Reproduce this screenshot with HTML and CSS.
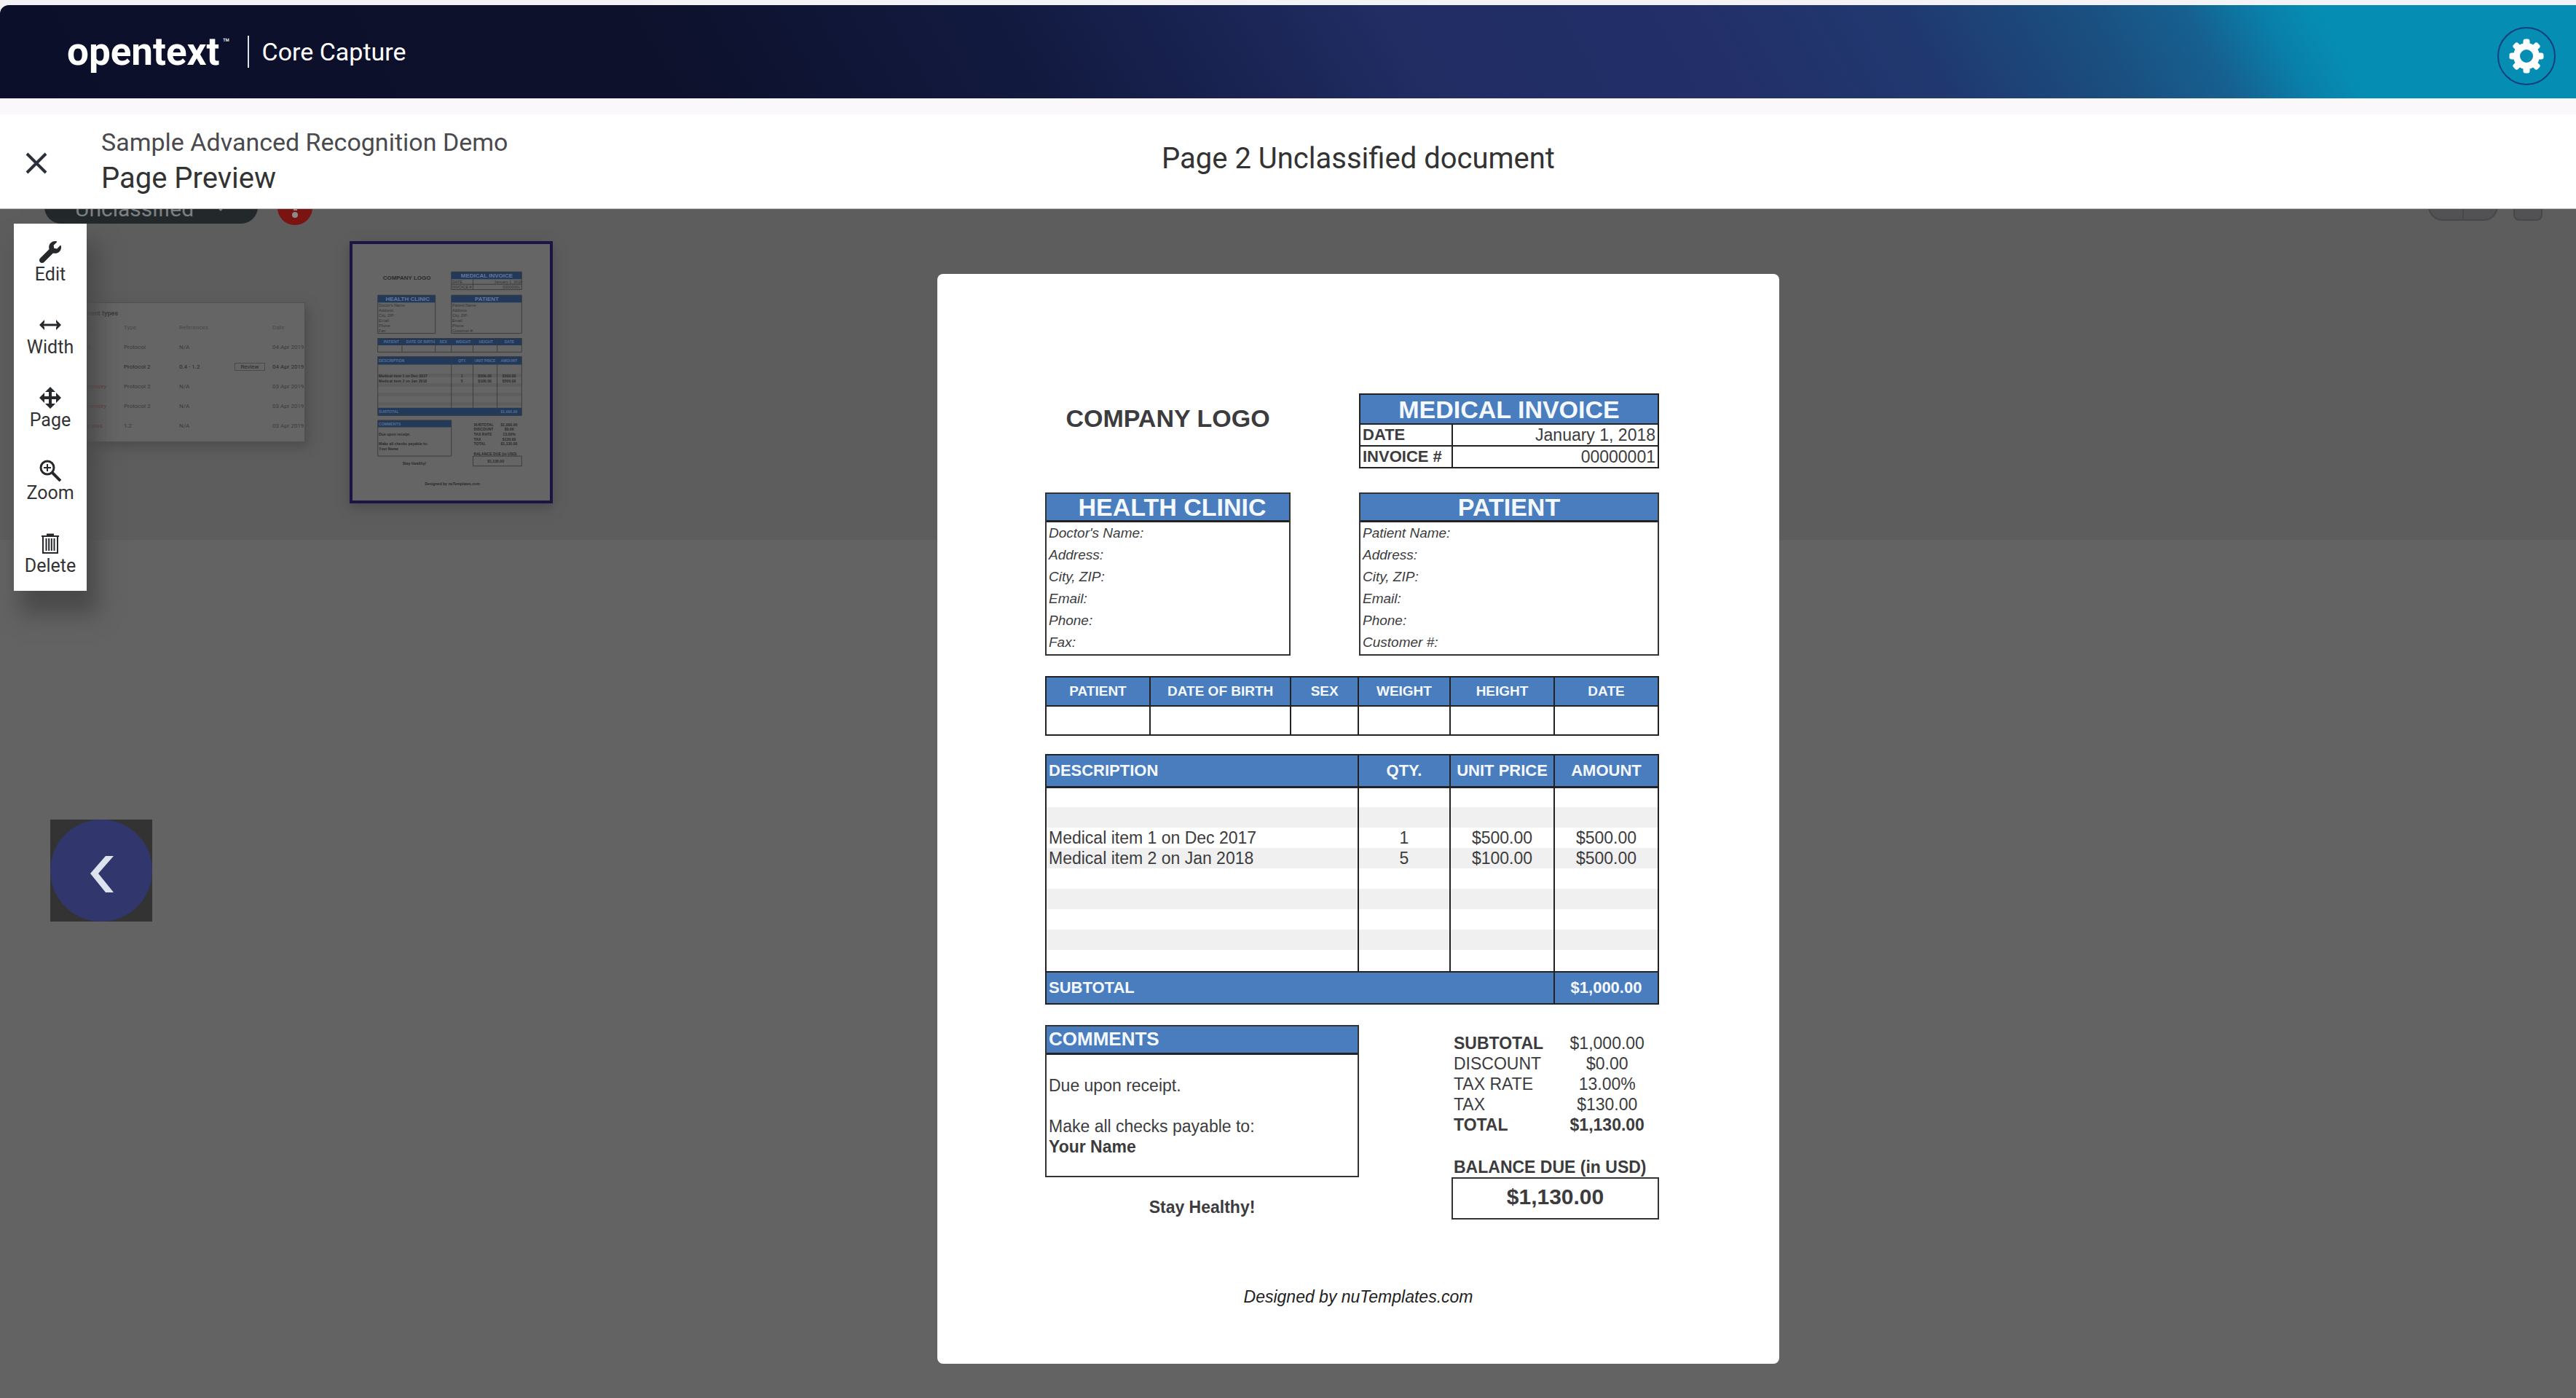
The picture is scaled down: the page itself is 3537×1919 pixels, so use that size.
FILE: index.html
```html
<!DOCTYPE html>
<html lang="en">
<head>
<meta charset="utf-8">
<title>Core Capture - Page Preview</title>
<link rel="stylesheet" href="styles.css">
</head>
<body>
<header class="masthead">
  <div class="brand">opentext<span class="tm">™</span></div>
  <div class="product">Core Capture</div>
  <button class="settings" aria-label="Settings">
    <svg viewBox="0 0 48 48" width="48" height="48">
      <g fill="#fff">
        <path fill-rule="evenodd" d="M24 6a18 18 0 1 0 0 36a18 18 0 0 0 0-36zM24 15a9 9 0 1 1 0 18a9 9 0 0 1 0-18z"/>
        <g id="teeth">
          <rect x="19.500" y="0.500" width="9" height="9" rx="3"/>
          <rect x="19.500" y="38.500" width="9" height="9" rx="3"/>
          <rect x="0.500" y="19.500" width="9" height="9" rx="3"/>
          <rect x="38.500" y="19.500" width="9" height="9" rx="3"/>
        </g>
        <use href="#teeth" transform="rotate(45 24 24)"/>
      </g>
    </svg>
  </button>
</header>

<div class="titlebar">
  <div class="crumbs">
    <button class="close" aria-label="Close">
      <svg viewBox="0 0 30 30" width="30" height="30"><path d="M2 2L28 28M28 2L2 28" stroke="#2b2f38" stroke-width="4" fill="none"/></svg>
    </button>
    <div>
      <div class="job">Sample Advanced Recognition Demo</div>
      <h1 class="view">Page Preview</h1>
    </div>
  </div>
  <h2 class="doc-title">Page 2 Unclassified document</h2>
</div>

<main class="stage">
  <div class="backdrop" aria-hidden="true">
    <div class="band">
      <div class="class-row">
        <div class="pill">Unclassified
          <svg viewBox="0 0 14 8" width="14" height="8"><path d="M0 0h14L7 8z" fill="#7c8082"/></svg>
        </div>
        <svg class="alert" viewBox="0 0 48 48" width="48" height="48"><circle cx="24" cy="24" r="24" fill="#7a1410"/><path d="M21 8h7l-1 20h-5z" fill="#8b8b8b"/><circle cx="24" cy="34" r="4" fill="#8b8b8b"/></svg>
        <div class="switch"><span></span><span></span></div>
        <div class="more"></div>
      </div>
      <div class="thumbs">
        <div class="thumb-list">
          <div class="list-title">Document types</div>
          <table>
            <tr><th>Name</th><th>Type</th><th>References</th><th></th><th>Date</th></tr>
            <tr><td>Invoice</td><td>Protocol</td><td>N/A</td><td></td><td>04 Apr 2019</td></tr>
            <tr class="strong"><td>Claim</td><td>Protocol 2</td><td>0.4 - 1.2</td><td><span class="tag">Review</span></td><td>04 Apr 2019</td></tr>
            <tr><td class="bad">Low memory</td><td>Protocol 2</td><td>N/A</td><td></td><td>03 Apr 2019</td></tr>
            <tr><td class="bad">Low memory</td><td>Protocol 2</td><td>N/A</td><td></td><td>03 Apr 2019</td></tr>
            <tr><td class="bad">Certificates</td><td>1.2</td><td>N/A</td><td></td><td>03 Apr 2019</td></tr>
          </table>
        </div>
        <svg class="thumb-page" viewBox="0 0 1156 1500">
          <g fill="#22395a">
            <path d="M579 160h412v45h-412zM148 297h337v45h-337zM579 297h412v45h-412zM148 550h843v42h-843zM148 657h843v48h-843zM148 958h843v46h-843zM148 1030h431v42h-431z"/>
          </g>
          <path d="M148 768h843M148 825h843M148 880h843M148 936h843" stroke="#5d5d5d" stroke-width="20"/>
          <g fill="none" stroke="#3b3b3b" stroke-width="4">
            <path d="M579 164h412v102h-412zM706 205v61M579 235h412M148 300h337v222h-337zM579 300h412v222h-412zM148 552h843v80h-843zM290 552v80M485 552v80M579 552v80M706 552v80M847 552v80M148 659h843v344h-843zM579 659v300M706 659v300M847 659v344M148 1032h431v209h-431zM706 1241h285v58h-285z"/>
          </g>
          <g class="tp-big">
            <text x="178" y="210" class="tp-logo">COMPANY LOGO</text>
            <text x="635" y="196">MEDICAL INVOICE</text>
            <text x="194" y="332">HEALTH CLINIC</text>
            <text x="717" y="332">PATIENT</text>
          </g>
          <g class="tp-head">
            <text x="182" y="578">PATIENT</text><text x="315" y="578">DATE OF BIRTH</text><text x="510" y="578">SEX</text><text x="605" y="578">WEIGHT</text><text x="740" y="578">HEIGHT</text><text x="890" y="578">DATE</text>
            <text x="154" y="689">DESCRIPTION</text><text x="618" y="689">QTY.</text><text x="714" y="689">UNIT PRICE</text><text x="868" y="689">AMOUNT</text>
            <text x="154" y="987">SUBTOTAL</text><text x="868" y="987">$1,000.00</text><text x="154" y="1060">COMMENTS</text>
          </g>
          <g class="tp-text">
            <text x="584" y="229">DATE</text><text x="830" y="229">January 1, 2018</text><text x="584" y="260">INVOICE #</text><text x="880" y="260">00000001</text>
            <text x="154" y="364">Doctor's Name:</text><text x="154" y="394">Address:</text><text x="154" y="424">City, ZIP:</text><text x="154" y="454">Email:</text><text x="154" y="484">Phone:</text><text x="154" y="514">Fax:</text>
            <text x="584" y="364">Patient Name:</text><text x="584" y="394">Address:</text><text x="584" y="424">City, ZIP:</text><text x="584" y="454">Email:</text><text x="584" y="484">Phone:</text><text x="584" y="514">Customer #:</text>
          </g>
          <g class="tp-text tp-dark">
            <text x="154" y="782">Medical item 1 on Dec 2017</text><text x="635" y="782">1</text><text x="735" y="782">$500.00</text><text x="878" y="782">$500.00</text>
            <text x="154" y="810">Medical item 2 on Jan 2018</text><text x="635" y="810">5</text><text x="735" y="810">$100.00</text><text x="878" y="810">$500.00</text>
            <text x="154" y="1122">Due upon receipt.</text><text x="154" y="1178">Make all checks payable to:</text><text x="154" y="1206">Your Name</text><text x="293" y="1290">Stay Healthy!</text>
            <text x="710" y="1065">SUBTOTAL</text><text x="868" y="1065">$1,000.00</text><text x="710" y="1093">DISCOUNT</text><text x="890" y="1093">$0.00</text><text x="710" y="1121">TAX RATE</text><text x="880" y="1121">13.00%</text><text x="710" y="1149">TAX</text><text x="878" y="1149">$130.00</text><text x="710" y="1178">TOTAL</text><text x="868" y="1178">$1,130.00</text>
            <text x="710" y="1235">BALANCE DUE (in USD)</text><text x="790" y="1278">$1,130.00</text><text x="424" y="1413">Designed by nuTemplates.com</text>
          </g>
        </svg>
      </div>
    </div>
  </div>

  <div class="side">
    <nav class="tools" aria-label="Page tools">
      <button><svg viewBox="0 0 512 512" width="30" height="30"><path fill="#26292c" d="M507.730 109.100c-2.240-9.030-13.540-12.090-20.120-5.510l-74.360 74.360-67.880-11.310-11.310-67.880 74.360-74.360c6.620-6.620 3.430-17.900-5.660-20.160-47.380-11.740-99.550.910-136.580 37.930-39.640 39.640-50.550 97.100-34.050 147.200L18.740 402.760c-24.990 24.990-24.990 65.510 0 90.500 24.990 24.990 65.510 24.990 90.500 0l213.210-213.210c50.120 16.710 107.470 5.680 147.370-34.220 37.070-37.070 49.700-89.320 37.910-136.730z"/></svg>Edit</button>
      <button><svg viewBox="0 0 30 30" width="30" height="30" fill="#26292c"><path d="M4 13.500h22v3H4z"/><path d="M0 15l7-7v3.500L5 15l2 3.500V22zM30 15l-7-7v3.500L25 15l-2 3.500V22z"/></svg>Width</button>
      <button><svg viewBox="0 0 30 30" width="30" height="30" fill="#26292c"><path d="M13 5h4v8h8v4h-8v8h-4v-8H5v-4h8z"/><path d="M15 0l7 7H8zM15 30l7-7H8zM0 15l7-7v14zM30 15l-7-7v14z"/></svg>Page</button>
      <button><svg viewBox="0 0 30 30" width="30" height="30" fill="none" stroke="#26292c"><circle cx="11" cy="11" r="9" stroke-width="3"/><path d="M18 18l11 11" stroke-width="4"/><path d="M6 11h10M11 6v10" stroke-width="2"/></svg>Zoom</button>
      <button><svg viewBox="0 0 30 30" width="30" height="30" fill="none" stroke="#26292c"><path d="M3 5h24" stroke-width="2"/><path d="M10 3h10" stroke-width="3"/><path d="M5 5v23h20V5" stroke-width="2"/><path d="M9.500 8v17M13.200 8v17M16.800 8v17M20.500 8v17" stroke-width="2"/></svg>Delete</button>
    </nav>
    <button class="prev" aria-label="Previous page">
      <svg viewBox="0 0 140 140" width="140" height="140"><circle cx="70" cy="70" r="70" fill="#31366c"/><path d="M76 50h11L66 74l21 26H76L55 74z" fill="#dde3ee"/></svg>
    </button>
  </div>

  <article class="paper">
    <div class="sheet">
      <div class="grid head">
        <div class="logo">COMPANY LOGO</div>
        <table class="invoice-id">
          <colgroup><col class="c4"><col></colgroup>
          <thead><tr><th colspan="2" class="big">MEDICAL INVOICE</th></tr></thead>
          <tbody>
            <tr><th>DATE</th><td>January 1, 2018</td></tr>
            <tr><th>INVOICE #</th><td>00000001</td></tr>
          </tbody>
        </table>
      </div>

      <div class="grid parties">
        <section class="box clinic">
          <h3 class="big">HEALTH CLINIC</h3>
          <ul><li>Doctor's Name:</li><li>Address:</li><li>City, ZIP:</li><li>Email:</li><li>Phone:</li><li>Fax:</li></ul>
        </section>
        <section class="box patient">
          <h3 class="big">PATIENT</h3>
          <ul><li>Patient Name:</li><li>Address:</li><li>City, ZIP:</li><li>Email:</li><li>Phone:</li><li>Customer #:</li></ul>
        </section>
      </div>

      <table class="vitals">
        <colgroup><col class="v1"><col class="v2"><col class="v3"><col class="v4"><col class="v5"><col></colgroup>
        <thead><tr><th>PATIENT</th><th>DATE OF BIRTH</th><th>SEX</th><th>WEIGHT</th><th>HEIGHT</th><th>DATE</th></tr></thead>
        <tbody><tr><td></td><td></td><td></td><td></td><td></td><td></td></tr></tbody>
      </table>

      <table class="items">
        <colgroup><col class="d1"><col class="v4"><col class="v5"><col></colgroup>
        <thead><tr><th>DESCRIPTION</th><th>QTY.</th><th>UNIT PRICE</th><th>AMOUNT</th></tr></thead>
        <tbody>
          <tr><td></td><td></td><td></td><td></td></tr>
          <tr><td></td><td></td><td></td><td></td></tr>
          <tr><td>Medical item 1 on Dec 2017</td><td>1</td><td>$500.00</td><td>$500.00</td></tr>
          <tr><td>Medical item 2 on Jan 2018</td><td>5</td><td>$100.00</td><td>$500.00</td></tr>
          <tr><td></td><td></td><td></td><td></td></tr>
          <tr><td></td><td></td><td></td><td></td></tr>
          <tr><td></td><td></td><td></td><td></td></tr>
          <tr><td></td><td></td><td></td><td></td></tr>
          <tr><td></td><td></td><td></td><td></td></tr>
        </tbody>
        <tfoot><tr><th colspan="3">SUBTOTAL</th><th>$1,000.00</th></tr></tfoot>
      </table>

      <div class="grid foot">
        <div class="notes">
          <section class="box comments">
            <h3>COMMENTS</h3>
            <p>Due upon receipt.</p>
            <p>Make all checks payable to:<br><b>Your Name</b></p>
          </section>
          <p class="wish">Stay Healthy!</p>
        </div>
        <div class="summary">
          <table class="totals">
            <tr class="strong"><th>SUBTOTAL</th><td class="plain">$1,000.00</td></tr>
            <tr><th>DISCOUNT</th><td>$0.00</td></tr>
            <tr><th>TAX RATE</th><td>13.00%</td></tr>
            <tr><th>TAX</th><td>$130.00</td></tr>
            <tr class="strong"><th>TOTAL</th><td>$1,130.00</td></tr>
          </table>
          <div class="due-label">BALANCE DUE (in USD)</div>
          <div class="due">$1,130.00</div>
        </div>
      </div>
    </div>
    <footer class="credit">Designed by nuTemplates.com</footer>
  </article>
</main>
</body>
</html>
```
FILE: styles.css
```css
* { box-sizing: border-box; }
body {
  margin: 0;
  padding-top: 7px;
  min-height: 100vh;
  display: flex;
  flex-direction: column;
  background: #f3f2f6;
  font-family: Roboto, sans-serif;
  color: #333;
}
h1, h2, h3, p, ul { margin: 0; padding: 0; }
button { border: 0; padding: 0; background: none; font: inherit; color: inherit; }
svg { display: block; flex: none; }

/* Masthead */
.masthead {
  height: 128px;
  display: flex;
  align-items: center;
  padding: 0 28px 0 92px;
  border-top-left-radius: 12px;
  background: linear-gradient(60deg, #0b0f2a 0%, #0d112c 26%, #121a40 40%, #202c62 54%, #232f69 66%, #20386f 74%, #1a4f80 81%, #166090 85%, #0980aa 88%, #068db3 90%);
  color: #fff;
}
.brand { display: flex; font-size: 53px; font-weight: 700; line-height: 60px; }
.tm { padding-left: 4px; font-size: 16px; font-weight: 400; line-height: 36px; }
.product {
  height: 44px;
  margin-left: 24px;
  padding-left: 18px;
  border-left: 2px solid #dfe0e8;
  font-size: 34px;
  line-height: 44px;
}
.settings {
  width: 80px;
  height: 80px;
  margin: 12px 0 0 auto;
  border: 2px solid #10407c;
  border-radius: 50%;
  display: grid;
  place-items: center;
}

/* Title bar */
.titlebar {
  height: 152px;
  display: grid;
  grid-template-columns: 1287fr 1156fr 1094fr;
  background: linear-gradient(#faf8fa 0 22px, #fff 22px);
  border-bottom: 1px solid #b8b8b8;
}
.crumbs { display: flex; align-items: flex-start; padding: 36px 0 0 35px; }
.close { width: 30px; height: 30px; margin: 38px 74px 0 0; }
.job { font-size: 34px; line-height: 48px; color: #4a4a4e; }
.view { font-size: 40px; font-weight: 400; line-height: 52px; }
.doc-title { padding-top: 58px; font-size: 40px; font-weight: 400; line-height: 50px; text-align: center; }

/* Stage */
.stage {
  position: relative;
  flex: 1;
  display: grid;
  grid-template-columns: 1287fr 1156fr 1094fr;
  align-items: start;
  padding-bottom: 46px;
  background: #636363;
}
.backdrop { position: absolute; inset: 0; overflow: hidden; }
.band { display: flow-root; height: 454px; background: #5d5d5d; }
.class-row { display: flex; align-items: flex-start; margin-top: -26px; height: 50px; padding: 0 46px 0 61px; }
.pill {
  width: 293px;
  height: 46px;
  padding: 4px 44px 0 42px;
  display: flex;
  align-items: center;
  justify-content: space-between;
  border-radius: 23px;
  background: #23292b;
  color: #7c8082;
  font-size: 30px;
}
.alert { margin-left: 27px; }
.switch { display: flex; width: 96px; height: 42px; margin-left: auto; border: 2px solid #48484a; border-radius: 20px; background: #525254; }
.switch span { flex: 1; }
.switch span + span { border-left: 2px solid #48484a; }
.more { width: 40px; height: 42px; margin-left: 21px; border: 2px solid #48484a; border-radius: 8px; background: #525254; }
.thumbs { display: flex; align-items: center; gap: 61px; padding: 20px 0 0 75px; }
.thumb-list {
  width: 344px;
  height: 192px;
  padding: 8px 0 0 10px;
  border: 1px solid #505050;
  background: #656565;
  box-shadow: 4px 6px 14px #4c4c4c;
  color: #3a3a3a;
  font-size: 8px;
}
.list-title { width: 76px; text-align: right; font-weight: 700; font-size: 9px; line-height: 12px; white-space: nowrap; }
.thumb-list table { width: 100%; border-collapse: collapse; table-layout: fixed; }
.thumb-list td, .thumb-list th { height: 27px; padding: 0; text-align: left; white-space: nowrap; }
.thumb-list th { font-weight: 400; color: #484848; }
.thumb-list tr > :nth-child(1) { width: 84px; padding-left: 14px; }
.thumb-list tr > :nth-child(2) { width: 76px; }
.thumb-list tr > :nth-child(3) { width: 76px; }
.thumb-list tr > :nth-child(4) { width: 52px; }
.thumb-list .bad { color: #6b2c2c; }
.thumb-list .strong { color: #2a2a2a; }
.tag { display: block; width: 42px; border: 1px solid #4a4a4a; text-align: center; }
.thumb-page {
  width: 279px;
  height: 360px;
  border: 4px solid #1a1545;
  background: #656565;
  box-shadow: 0 6px 14px #4c4c4c;
  font-family: "Liberation Sans", sans-serif;
}
.tp-big { font-size: 34px; font-weight: 700; fill: #64799a; }
.tp-logo { fill: #2a2a2a; }
.tp-head { font-size: 22px; font-weight: 700; fill: #5a7090; }
.tp-text { font-size: 23px; fill: #333; }
.tp-dark { font-weight: 700; fill: #2a2a2a; font-size: 22px; }

/* Left tools */
.side { position: relative; padding: 20px 0 0 19px; }
.tools { width: 100px; padding: 2px 0; background: #fff; box-shadow: 12px 28px 28px 4px #4a4a4a; }
.tools button {
  width: 100%;
  height: 100px;
  padding-top: 4px;
  display: flex;
  flex-direction: column;
  align-items: center;
  justify-content: center;
  gap: 2px;
  font-size: 25px;
  line-height: 28px;
}
.prev { display: block; width: 140px; height: 140px; margin: 314px 0 0 50px; background: #333; }

/* Document */
.paper {
  position: relative;
  margin-top: 89px;
  padding-bottom: 78px;
  border-radius: 8px;
  background: #fff;
  font-family: "Liberation Sans", sans-serif;
  font-size: 23px;
  line-height: 28px;
  color: #3c3c3e;
}
.sheet { padding: 164px 165px 0 148px; }
.sheet table { width: 100%; border-collapse: collapse; table-layout: fixed; }
.sheet td, .sheet th { padding: 0 3px; }
.grid { display: grid; grid-template-columns: 142fr 195fr 94fr 127fr 141fr 144fr; align-items: start; }
.big, .logo { font-size: 34px; font-weight: 700; text-align: center; }
.logo { grid-column: 1 / 3; line-height: 68px; }

.invoice-id { grid-column: 4 / 7; border: 2px solid #222; }
.invoice-id .c4 { width: 31%; }
.invoice-id tr { height: 30px; }
.invoice-id thead tr { height: 41px; }
.invoice-id th, .invoice-id td { border: 2px solid #222; text-align: right; }
.invoice-id tbody th { text-align: left; font-size: 22px; }
.invoice-id thead th { background: #4a7dbd; color: #f4f8ff; text-align: center; }

.parties { margin-top: 33px; }
.box { border: 2px solid #333; }
.box h3 { height: 39px; border-bottom: 3px solid #222; background: #4a7dbd; color: #f4f8ff; line-height: 36px; }
.box ul { list-style: none; padding: 0 3px 1px; font-size: 19px; font-style: italic; line-height: 30px; }
.clinic { grid-column: 1 / 3; }
.clinic h3 { padding-left: 12px; }
.patient { grid-column: 4 / 7; }

.v1 { width: 17%; }
.v2 { width: 23%; }
.v3 { width: 11%; }
.v4 { width: 15%; }
.v5 { width: 17%; }
.d1 { width: 51%; }
.vitals { margin-top: 28px; }
.vitals tr { height: 40px; }
.vitals th, .vitals td { border: 2px solid #222; }
.vitals th { background: #4a7dbd; color: #f4f8ff; font-size: 19px; }

.items { margin-top: 25px; border: 2px solid #222; }
.items th, .items td { border: 0 solid #222; border-width: 0 2px; text-align: center; }
.items tr > :first-child { text-align: left; }
.items thead tr { height: 44px; }
.items tbody tr { height: 28px; }
.items tbody tr:last-child { height: 30px; }
.items tfoot tr { height: 44px; }
.items thead th { border-bottom-width: 3px; }
.items tfoot th { border-top-width: 2px; }
.items thead th, .items tfoot th { background: #4a7dbd; color: #f4f8ff; font-size: 22px; }
.items thead th { padding: 0 1px; }
.items thead th:first-child { padding-left: 3px; }
.items tbody tr:nth-child(even) { background: #f1f0f1; }

.foot { margin-top: 28px; }
.notes { grid-column: 1 / 4; }
.comments { height: 209px; }
.comments h3 { padding-left: 3px; font-size: 26px; line-height: 34px; }
.comments p { padding: 28px 3px 0; }
.wish { margin-top: 27px; text-align: center; font-weight: 700; }
.summary { grid-column: 5 / 7; padding-top: 11px; }
.totals th { font-weight: 400; text-align: left; }
.sheet .totals th, .sheet .totals td { height: 28px; line-height: 28px; }
.totals td { text-align: center; }
.totals .strong > * { font-weight: 700; }
.totals .strong > .plain { font-weight: 400; }
.due-label { margin-top: 30px; padding-left: 3px; font-weight: 700; }
.due { height: 58px; border: 2px solid #333; font-size: 30px; font-weight: 700; line-height: 50px; text-align: center; }
.credit { margin-top: 92px; font-style: italic; text-align: center; color: #222; }
```
